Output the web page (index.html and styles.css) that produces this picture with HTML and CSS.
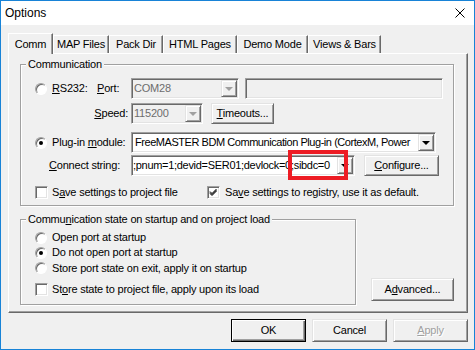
FILE: index.html
```html
<!DOCTYPE html>
<html lang="en">
<head>
    <meta charset="UTF-8">
    <title>Options</title>
    <link rel="stylesheet" href="styles.css">
</head>
<body>
    <div class="window">
        <div class="titlebar">
            <span class="title">Options</span>
            <svg class="close" width="10" height="10" viewBox="0 0 10 10">
                <path d="M0.5 0.5 L9.5 9.5 M9.5 0.5 L0.5 9.5" stroke="#000" stroke-width="1" fill="none"/>
            </svg>
        </div>

        <div class="client">
            <!-- Tab strip -->
            <div class="tabs">
                <div class="tab tab-active w-comm">Comm</div>
                <div class="tab w-map">MAP Files</div>
                <div class="tab w-pack">Pack Dir</div>
                <div class="tab w-html">HTML Pages</div>
                <div class="tab w-demo">Demo Mode</div>
                <div class="tab w-views">Views &amp; Bars</div>
            </div>

            <div class="panel">
                <!-- Communication group -->
                <div class="group group-comm">
                    <div class="group-title">Communication</div>

                    <div class="row row-rs">
                        <div class="cell cell-rs"><span class="radio"></span><span><u>R</u>S232:</span></div>
                        <div class="cell cell-port"><u>P</u>ort:</div>
                        <div class="combo combo-port disabled">
                            <span class="combo-text">COM28</span>
                            <span class="drop"><i class="arrow"></i></span>
                        </div>
                        <div class="field field-rs disabled"></div>
                    </div>

                    <div class="row row-speed">
                        <div class="cell cell-speed"><u>S</u>peed:</div>
                        <div class="combo combo-speed disabled">
                            <span class="combo-text">115200</span>
                            <span class="drop"><i class="arrow"></i></span>
                        </div>
                        <div class="btn btn-timeouts"><span><u>T</u>imeouts...</span></div>
                    </div>

                    <div class="row row-plug">
                        <div class="cell cell-plug"><span class="radio on"></span><span>Plug-in <u>m</u>odule:</span></div>
                        <div class="combo combo-plug">
                            <span class="combo-text">FreeMASTER BDM Communication Plug-in (CortexM, Power</span>
                            <span class="drop"><i class="arrow"></i></span>
                        </div>
                    </div>

                    <div class="row row-connect">
                        <div class="cell cell-connect"><u>C</u>onnect string:</div>
                        <div class="connect-wrap">
                            <div class="combo field-connect">
                                <span class="combo-text">;pnum=1;devid=SER01;devlock=0;sibdc=0</span>
                                <span class="drop"><i class="arrow"></i></span>
                            </div>
                            <div class="mark"></div>
                        </div>
                        <div class="btn btn-configure"><span><u>C</u>onfigure...</span></div>
                    </div>

                    <div class="row row-save">
                        <div class="cell cell-save1">
                            <span class="check"></span>
                            <span>S<u>a</u>ve settings to project file</span>
                        </div>
                        <div class="cell cell-save2">
                            <span class="check">
                                <svg width="11" height="11" viewBox="0 0 11 11">
                                    <path d="M2 4.5 L4 6.5 L8.5 2 M2 5.5 L4 7.5 L8.5 3 M2 6.5 L4 8.5 L8.5 4" stroke="#000" stroke-width="1" fill="none"/>
                                </svg>
                            </span>
                            <span>Sa<u>v</u>e settings to registry, use it as default.</span>
                        </div>
                    </div>
                </div>

                <!-- Startup group + Advanced -->
                <div class="lower">
                    <div class="group group-state">
                        <div class="group-title">Commu<u>n</u>ication state on startup and on project load</div>
                        <div class="srow srow-1"><span class="radio"></span><span>Open port at startup</span></div>
                        <div class="srow srow-2"><span class="radio on"></span><span>Do not open port at startup</span></div>
                        <div class="srow srow-3"><span class="radio"></span><span>Store port state on exit, apply it on startup</span></div>
                        <div class="srow crow"><span class="check"></span><span>St<u>o</u>re state to project file, apply upon its load</span></div>
                    </div>
                    <div class="btn btn-advanced"><span>A<u>d</u>vanced...</span></div>
                </div>
            </div>

            <!-- Dialog buttons -->
            <div class="buttons">
                <div class="btn btn-dlg btn-default">OK</div>
                <div class="btn btn-dlg">Cancel</div>
                <div class="btn btn-dlg btn-disabled"><span><u>A</u>pply</span></div>
            </div>
        </div>
    </div>
</body>
</html>
```

FILE: styles.css
```css
* {
    box-sizing: border-box;
}

body {
    margin: 0;
    font-family: "Liberation Sans", Arial, sans-serif;
    font-size: 11px;
    letter-spacing: -0.2px;
    color: #000;
    background: #fff;
}

u {
    text-decoration: underline;
    text-underline-offset: 1px;
}

.window {
    width: 475px;
    height: 350px;
    border: 1px solid #1883d7;
    display: flex;
    flex-direction: column;
    background: #f0f0f0;
}

.titlebar {
    height: 24px;
    flex: none;
    background: #fff;
    display: flex;
    align-items: center;
    padding-left: 4px;
    font-size: 12px;
    letter-spacing: 0;
}

.close {
    margin-left: auto;
    margin-right: 9px;
}

.client {
    flex: 1;
    padding: 8px 6px 0 7px;
}

/* tabs */
.tabs {
    display: flex;
    align-items: flex-end;
    height: 20px;
}

.tab {
    height: 18px;
    border-top: 1px solid #fff;
    border-left: 1px solid #fff;
    border-right: 1px solid #696969;
    box-shadow: inset -1px 0 #a0a0a0;
    display: flex;
    align-items: center;
    justify-content: center;
    line-height: 13px;
    white-space: nowrap;
}

.tab-active {
    height: 21px;
    margin-bottom: -1px;
    position: relative;
    z-index: 1;
    background: #f0f0f0;
}

.w-comm { width: 45px; }
.w-map { width: 56px; }
.w-pack { width: 54px; }
.w-html { width: 74px; }
.w-demo { width: 71px; }
.w-views { width: 73px; }

.panel {
    height: 260px;
    border: 1px solid;
    border-color: #fff #696969 #696969 #fff;
    box-shadow: inset -1px -1px #a0a0a0;
    padding: 10px 0 0 11px;
}

/* group boxes */
.group {
    border: 1px solid #a0a0a0;
    box-shadow: inset 1px 1px #fff, 1px 1px #fff;
}

.group-title {
    width: fit-content;
    margin: -7px 0 0 5px;
    padding: 0 2px;
    background: #f0f0f0;
    line-height: 13px;
    white-space: nowrap;
}

.group-comm {
    width: 434px;
    height: 142px;
}

.row {
    display: flex;
    align-items: center;
    margin-left: 14px;
    height: 21px;
    line-height: 13px;
}

.row-rs { margin-top: 7px; }
.row-speed { margin-top: 4px; }
.row-plug { margin-top: 8px; }
.row-connect { margin-top: 2px; }
.row-save { margin-top: 9px; height: 15px; }

.cell {
    display: flex;
    align-items: center;
    flex: none;
    white-space: nowrap;
}

.cell-rs { width: 62px; gap: 5px; }
.cell-port { width: 34px; }
.cell-speed { width: 96px; justify-content: flex-end; padding-right: 3px; }
.cell-plug { width: 96px; gap: 5px; }
.cell-connect { width: 96px; padding-left: 14px; }
.cell-save1 { width: 172px; gap: 4px; }
.cell-save2 { gap: 5px; }

/* sunken edit / combo */
.combo,
.field {
    height: 21px;
    border: 1px solid;
    border-color: #a0a0a0 #fff #fff #a0a0a0;
    box-shadow: inset 1px 1px #696969, inset -1px -1px #e3e3e3;
    padding: 1px;
    background: #fff;
    display: flex;
    align-items: stretch;
    flex: none;
}

.combo.disabled,
.field.disabled {
    background: #f0f0f0;
    color: #6d6d6d;
}

.combo-text {
    flex: 1;
    overflow: hidden;
    white-space: nowrap;
    padding-left: 1px;
    display: flex;
    align-items: center;
}

.drop {
    width: 16px;
    flex: none;
    background: #f0f0f0;
    border: 1px solid;
    border-color: #e3e3e3 #696969 #696969 #e3e3e3;
    box-shadow: inset 1px 1px #fff, inset -1px -1px #a0a0a0;
    display: flex;
    align-items: center;
    justify-content: center;
}

.arrow {
    width: 0;
    height: 0;
    border-left: 4px solid transparent;
    border-right: 4px solid transparent;
    border-top: 4px solid #000;
    margin-top: 1px;
}

.disabled .arrow {
    border-top-color: #a0a0a0;
}

.combo-port { width: 108px; }
.field-rs { width: 198px; margin-left: 6px; }
.combo-speed { width: 72px; }
.combo-plug { width: 305px; }
.combo-plug .combo-text { padding-left: 2px; letter-spacing: -0.45px; }

.connect-wrap {
    position: relative;
    width: 224px;
    height: 21px;
    flex: none;
}

.field-connect {
    width: 224px;
}

.field-connect .combo-text {
    padding-left: 0;
    letter-spacing: -0.3px;
}

.mark {
    position: absolute;
    left: 157px;
    top: -5px;
    width: 60px;
    height: 30px;
    border: 4px solid #ed1c24;
}

/* raised buttons */
.btn {
    flex: none;
    background: #f0f0f0;
    border: 1px solid;
    border-color: #e3e3e3 #696969 #696969 #e3e3e3;
    box-shadow: inset 1px 1px #fff, inset -1px -1px #a0a0a0;
    display: flex;
    align-items: center;
    justify-content: center;
    line-height: 13px;
    white-space: nowrap;
}

.btn-timeouts { width: 63px; height: 21px; margin-left: 8px; }
.btn-configure { width: 75px; height: 21px; margin-left: 9px; }

.btn-default {
    border-color: #000;
    box-shadow: inset 1px 1px #fff, inset -1px -1px #696969, inset -2px -2px #a0a0a0;
}

.btn-disabled {
    color: #a0a0a0;
    text-shadow: 1px 1px #fff;
}

/* radio and check boxes */
.radio {
    width: 12px;
    height: 12px;
    flex: none;
    border-radius: 50%;
    border: 1px solid;
    border-color: #a0a0a0 #fff #fff #a0a0a0;
    box-shadow: inset 1px 1px #696969;
    background: #fff;
    display: flex;
    align-items: center;
    justify-content: center;
}

.radio.on::after {
    content: "";
    width: 4px;
    height: 4px;
    border-radius: 50%;
    background: #000;
}

.check {
    width: 13px;
    height: 13px;
    flex: none;
    border: 1px solid;
    border-color: #a0a0a0 #fff #fff #a0a0a0;
    box-shadow: inset 1px 1px #696969, inset -1px -1px #e3e3e3;
    background: #fff;
    display: flex;
}

/* lower part */
.lower {
    display: flex;
    margin-top: 13px;
}

.group-state {
    width: 336px;
    height: 86px;
}

.srow {
    display: flex;
    align-items: center;
    gap: 5px;
    margin-left: 14px;
    line-height: 13px;
    white-space: nowrap;
}

.srow-1 { margin-top: 4px; height: 15px; }
.srow-2 { height: 15px; }
.srow-3 { height: 16px; }
.crow { margin-top: 5px; height: 16px; gap: 4px; }

.btn-advanced {
    width: 83px;
    height: 23px;
    margin-left: 15px;
    margin-top: 59px;
    align-self: flex-start;
}

.buttons {
    display: flex;
    justify-content: flex-end;
    gap: 6px;
    margin-top: 6px;
}

.btn-dlg {
    width: 75px;
    height: 23px;
}
```
